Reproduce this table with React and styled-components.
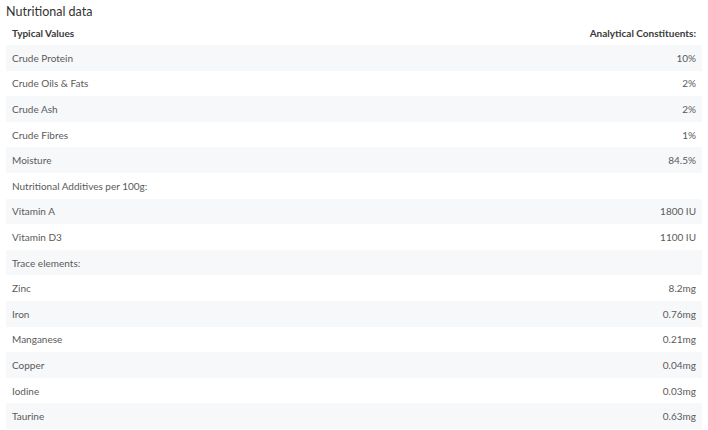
import styled, { createGlobalStyle } from "styled-components";

const GlobalStyle = createGlobalStyle`
  body {
    margin: 0;
    background: #ffffff;
    font-family: Lato, "Open Sans", sans-serif;
  }
`;

const rows = [
  ["Crude Protein", "10%"],
  ["Crude Oils & Fats", "2%"],
  ["Crude Ash", "2%"],
  ["Crude Fibres", "1%"],
  ["Moisture", "84.5%"],
  ["Nutritional Additives per 100g:", ""],
  ["Vitamin A", "1800 IU"],
  ["Vitamin D3", "1100 IU"],
  ["Trace elements:", ""],
  ["Zinc", "8.2mg"],
  ["Iron", "0.76mg"],
  ["Manganese", "0.21mg"],
  ["Copper", "0.04mg"],
  ["Iodine", "0.03mg"],
  ["Taurine", "0.63mg"],
];

const App = () => {
  return (
    <Wrapper>
      <GlobalStyle />
      <Title>Nutritional data</Title>
      <Table>
        <thead>
          <tr>
            <HeadCell>Typical Values</HeadCell>
            <HeadCell $right>Analytical Constituents:</HeadCell>
          </tr>
        </thead>
        <tbody>
          {rows.map(([label, value], i) => (
            <Row key={label} $striped={i % 2 === 0}>
              <Cell>{label}</Cell>
              <Cell $right>{value}</Cell>
            </Row>
          ))}
        </tbody>
      </Table>
    </Wrapper>
  );
};

export default App;

const Wrapper = styled.div`
  padding: 4px 6px 0 6px;
  color: #555;
`;

const Title = styled.div`
  font-size: 12.5px;
  color: #333;
  line-height: 16px;
`;

const Table = styled.table`
  width: 100%;
  border-collapse: collapse;
`;

const HeadCell = styled.th`
  height: 25px;
  padding: 0 6px;
  font-size: 10px;
  font-weight: 700;
  color: #3a3a3a;
  text-align: ${(p) => (p.$right ? "right" : "left")};
`;

const Row = styled.tr`
  background: ${(p) => (p.$striped ? "#f7f8fa" : "#ffffff")};
`;

const Cell = styled.td`
  height: 25.6px;
  padding: 0 6px;
  font-size: 10px;
  color: #5a5a5a;
  text-align: ${(p) => (p.$right ? "right" : "left")};
`;
